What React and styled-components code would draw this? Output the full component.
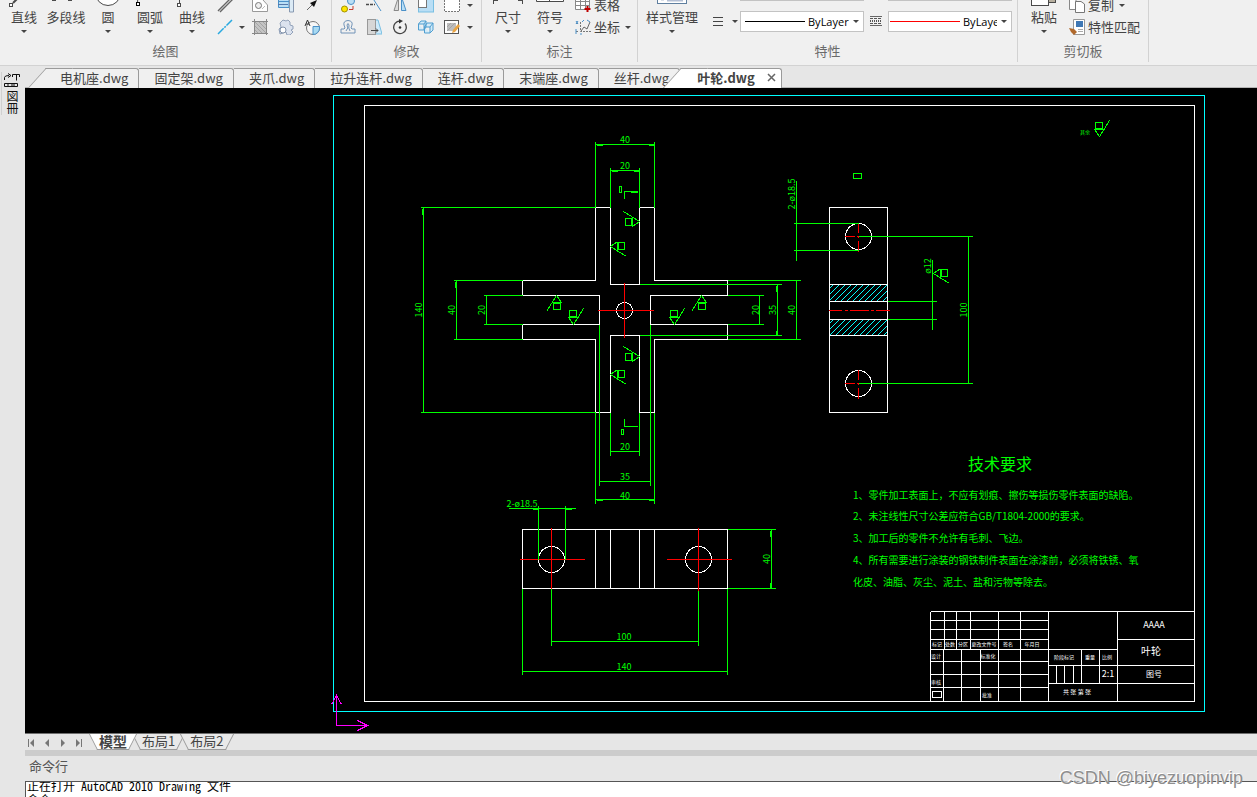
import React from "react";
import styled, { createGlobalStyle } from "styled-components";

const GlobalStyle = createGlobalStyle`
  * {
    box-sizing: border-box;
  }
  body {
    margin: 0;
    background-color: #e6e6e6;
    color: #444444;
    font-family: "Noto Sans CJK SC", "Noto Sans", sans-serif;
    font-size: 13px;
  }
  button {
    padding: 0;
    border: 0;
    background: none;
    color: inherit;
    font: inherit;
  }
`;

const Window = styled.div`
  position: relative;
  height: 100vh;
  display: flex;
  flex-direction: column;
  overflow: hidden;
`;

/* ribbon */

const Ribbon = styled.header`
  display: flex;
  flex: none;
  padding-bottom: 3px;
  overflow: hidden;
  background-color: #f0f0f0;
  border-bottom: 1px solid #d2d2d2;
`;

const Group = styled.section`
  display: flex;
  flex-direction: column;
  flex: none;
  border-right: 1px solid #d2d2d2;
`;

const GroupBody = styled.div`
  display: flex;
  align-items: flex-end;
  height: 42px;
  padding: ${(props) => props.$pad};
`;

const GroupTitle = styled.h2`
  margin: 0;
  height: 20px;
  color: #6a6a6a;
  font-size: 13px;
  font-weight: 400;
  line-height: 18px;
  text-align: center;
`;

const BigButton = styled.button`
  display: flex;
  flex-direction: column;
  align-items: center;
  flex: none;
  width: ${(props) => (props.$wide ? 60 : 42)}px;
  padding-bottom: 6px;
  line-height: 18px;
  white-space: nowrap;
`;

const CaretBox = styled.span`
  display: flex;
  align-items: center;
  justify-content: center;
  width: 10px;
  height: 10px;
  &::before {
    content: "";
    display: ${(props) => (props.$hidden ? "none" : "block")};
    border: 3px solid transparent;
    border-top-color: #444444;
    border-bottom-width: 0;
  }
`;

const CaretButton = styled(CaretBox).attrs({ as: "button" })`
  height: 22px;
`;

const ToolRows = styled.div`
  display: flex;
  flex-direction: column;
  padding-bottom: 4px;
`;

const ToolRow = styled.div`
  display: flex;
  height: 22px;
`;

const IconButton = styled.button`
  display: flex;
  align-items: center;
  justify-content: center;
  width: ${(props) => (props.$first ? 24 : 26)}px;
  height: 22px;
`;

const TextButton = styled.button`
  display: flex;
  align-items: center;
  gap: 3px;
  height: 22px;
  margin-left: 4px;
  line-height: 20px;
  white-space: nowrap;
`;

const ComboRows = styled.div`
  display: flex;
  flex-direction: column;
  gap: 9px;
  padding: 0 5px 10px 4px;
`;

const ComboRow = styled.div`
  display: flex;
  align-items: center;
`;

const Combo = styled.label`
  display: flex;
  align-items: center;
  width: 124px;
  height: 21px;
  padding: 0 2px 0 ${(props) => (props.$cut ? 1 : 4)}px;
  background-color: #ffffff;
  border: 1px solid #c3c3c3;
  &::before {
    content: "";
    flex: 1;
    height: 1px;
    margin-right: 3px;
    background-color: ${(props) => props.$line};
  }
`;

const ComboSelect = styled.select`
  width: ${(props) => (props.$cut ? 34 : 43)}px;
  height: 19px;
  margin: 0 ${(props) => (props.$cut ? 2 : 0)}px 0 0;
  padding: 0;
  border: 0;
  background: none;
  color: #000000;
  font-family: "Open Sans", "Noto Sans", sans-serif;
  font-size: 11px;
  text-overflow: clip;
  appearance: none;
`;

/* file tabs and canvas */

const Workspace = styled.div`
  display: flex;
  flex: 1;
  min-height: 0;
`;

const Palette = styled.aside`
  flex: none;
  width: 25px;
  padding: 6px 0 0 1px;
`;

const PaletteTab = styled.button`
  display: flex;
  flex-direction: column;
  align-items: center;
  width: 21px;
  height: 43px;
  border-left: 1px solid #d0d0d0;
  color: #111111;
  font-size: 12px;
`;

const PaletteLabel = styled.span`
  line-height: 14px;
  writing-mode: vertical-rl;
`;

const Editor = styled.main`
  display: flex;
  flex-direction: column;
  flex: 1;
  min-width: 0;
`;

const FileTabs = styled.nav`
  display: flex;
  flex: none;
  height: 22px;
  padding: 2px 0 0 20px;
  border-bottom: 1px solid #b4b4b4;
`;

const FileTab = styled.button`
  position: relative;
  display: flex;
  align-items: center;
  gap: 12px;
  height: 20px;
  padding: 0 10px 2px ${(props) => (props.$active ? 17 : 15)}px;
  background-color: ${(props) => (props.$active ? "#ffffff" : "#f0f0f0")};
  border-top: 1px solid #9a9a9a;
  border-right: 1px solid #9a9a9a;
  border-top-right-radius: 3px;
  font-weight: ${(props) => (props.$active ? 700 : 400)};
  line-height: 17px;
  white-space: nowrap;
  &::before {
    content: "";
    display: ${(props) => (props.$slant ? "block" : "none")};
    position: absolute;
    top: -1px;
    left: -18px;
    width: 26px;
    height: 20px;
    background-color: inherit;
    border-top: 1px solid #9a9a9a;
    border-left: 1px solid #9a9a9a;
    transform: skewX(-42deg);
    transform-origin: bottom left;
  }
`;

const TabLabel = styled.span`
  position: relative;
`;

const CloseIcon = styled.svg`
  margin-right: -5px;
`;

const Canvas = styled.div`
  position: relative;
  z-index: 1;
  flex: 1;
  min-height: 0;
  background-color: #000000;
`;

const Sheet = styled.svg`
  display: block;
  width: 100%;
  height: 100%;
`;

const Lines = styled.path`
  fill: none;
  stroke: ${(props) => props.$color};
  stroke-width: 1px;
  shape-rendering: crispEdges;
`;

const Note = styled.text`
  fill: ${(props) => props.$color || "#00ff00"};
  font-family: "Liberation Sans Narrow", "Noto Sans CJK SC", sans-serif;
  font-size: ${(props) => props.$size || 9}px;
  text-anchor: ${(props) => (props.$start ? "start" : "middle")};
`;

/* layout tabs */

const LayoutBar = styled.nav`
  display: flex;
  flex: none;
  height: 17px;
  padding-left: 2px;
  border-top: 1px solid #6e6e6e;
`;

const NavButton = styled.button`
  display: flex;
  align-items: center;
  width: 16px;
  height: 18px;
`;

const LayoutTab = styled.button`
  position: relative;
  z-index: ${(props) => (props.$active ? 1 : 0)};
  height: 16px;
  margin-left: ${(props) => (props.$active ? 8 : 15)}px;
  font-size: ${(props) => (props.$active ? 14 : 13)}px;
  font-weight: ${(props) => (props.$active ? 700 : 400)};
  line-height: 12px;
  padding-bottom: 3px;
  &::before,
  &::after {
    content: "";
    position: absolute;
    z-index: -1;
    top: 0;
    bottom: 0;
    width: 60%;
    background-color: ${(props) => (props.$active ? "#ffffff" : "#e9e9e9")};
    border-bottom: 1px solid #9a9a9a;
  }
  &::before {
    left: -6px;
    border-left: 1px solid #9a9a9a;
    transform: skewX(27deg);
  }
  &::after {
    right: -6px;
    border-right: 1px solid #9a9a9a;
    transform: skewX(-27deg);
  }
`;

const Splitter = styled.div`
  flex: none;
  height: 6px;
  background-color: #cccccc;
`;

/* command line */

const Command = styled.section`
  flex: none;
`;

const CommandTitle = styled.h2`
  margin: 0;
  height: 25px;
  padding-left: 4px;
  color: #555555;
  font-size: 13px;
  font-weight: 400;
  line-height: 20px;
`;

const History = styled.div`
  height: 16px;
  padding-left: 1px;
  overflow: hidden;
  background-color: #ffffff;
  border-top: 1px solid #555555;
  border-left: 1px solid #555555;
`;

const HistoryText = styled.p`
  margin: -3px 0 0;
  color: #000000;
  font-family: "Noto Sans Mono CJK SC", "Liberation Mono", monospace;
  font-size: 12px;
  line-height: 14px;
  white-space: pre;
`;

const Watermark = styled.div`
  position: absolute;
  right: 14px;
  bottom: 9px;
  color: #8f8f8f;
  font-family: "Liberation Sans", Arial, sans-serif;
  font-size: 18px;
  line-height: 20px;
  text-shadow: -1px -1px 0 #ffffff;
`;

const GREEN = "#00ff00";
const WHITE = "#ffffff";
const RED = "#ff0000";
const CYAN = "#00ffff";
const DARK = "#4a4a4a";
const BLUE = "#4a90c8";
const PALE = "#b9def5";

const bigIcons = {
  line: (
    <>
      <path d="M5 27L28 4" stroke={DARK} strokeWidth="2" />
      <rect x="1.5" y="27.5" width="3" height="3" fill="#fff" stroke={DARK} />
    </>
  ),
  polyline: (
    <>
      <rect x="2" y="22" width="4" height="3" fill={DARK} />
      <rect x="18" y="22" width="4" height="3" fill={DARK} />
    </>
  ),
  circle: <circle cx="16" cy="17" r="12.5" fill="#fff" stroke={DARK} />,
  arc: (
    <>
      <path d="M3.5 27Q3 8 28 4" stroke={DARK} fill="none" />
      <rect x="2.5" y="26.5" width="3" height="3" fill="#fff" stroke="#000" />
    </>
  ),
  curve: (
    <>
      <path d="M3.5 28V12" stroke={DARK} />
      <rect x="1.5" y="27.5" width="3" height="3" fill="#fff" stroke={DARK} />
    </>
  ),
  size: <path d="M1.5 28V10M30.5 28V10M2 24.5H6M26 24.5H30" stroke={DARK} />,
  symbol: <path d="M2.5 8V25.5H29.5V8M15.5 8V25" fill="#fff" stroke={DARK} />,
  style: (
    <>
      <rect x="1.5" y="4.5" width="29" height="23" fill="#fff" stroke="#5f7f9f" />
      <path d="M5 23.5H8M11 22.5H27M11 24.5H27" stroke="#b4bfd4" strokeWidth="2" />
    </>
  ),
  paste: (
    <>
      <rect x="20.5" y="8.5" width="7" height="18" fill="#b8b0a0" stroke={DARK} />
      <rect x="3.5" y="8.5" width="17" height="21" fill="#fff" stroke={DARK} />
    </>
  ),
};

const icons = {
  parallel: <path d="M1 14L15 0M3 15L17 1" stroke="#666" strokeWidth="1.4" />,
  ray: <path d="M1 15L15 1" stroke="#29a9e0" strokeWidth="1.5" strokeDasharray="8 1 2 1" />,
  region: (
    <>
      <path d="M.5 0V14.5H15.5V8L11 3V0" fill="#fff" stroke="#999" />
      <circle cx="6.5" cy="8.5" r="3" fill="#eee" stroke="#777" />
      <path d="M10 12L13 9" stroke="#bbb" />
    </>
  ),
  hatch: (
    <>
      <rect x="3" y="3" width="11" height="11" fill="#c4c4c4" />
      <path d="M3 3L14 14M3 7L10 14M7 3L14 10M11 3L14 6M3 11L6 14" stroke="#a4a4a4" />
      <path d="M2.5 0V16M14.5 0V16M0 2.5H16M0 14.5H16" stroke="#888" />
    </>
  ),
  table: (
    <>
      <path d="M.5 0V10.5H11V0M.5 4.5H15" fill={PALE} stroke={BLUE} />
      <path d="M0 7.5H10" stroke="#5577aa" />
      <path d="M11.5 0V15H15.5V0" stroke="#8798b0" fill="#dbeaf5" />
    </>
  ),
  cloud: (
    <>
      <path
        d="M5 1L8 2L10 1L12 3L12 6L15 7V10L13 11L15 13L12 16H9L8 13L2 15L1 10L3 8L2 4Z"
        fill="#dbe2ee"
        stroke="#91a1b9"
      />
      <circle cx="5" cy="11" r="3" fill="#fff" stroke="#8393ab" />
    </>
  ),
  pointer: (
    <>
      <path d="M3 13L9 7" stroke="#666" />
      <path d="M6 6L13 3L10 10Z" fill="#111" />
    </>
  ),
  pie: (
    <>
      <circle cx="9" cy="9" r="6.5" fill="#f7f7f7" stroke="#777" />
      <path d="M9 7.500H15.5V9A6.500 6.500 0 0 1 9 15.500Z" fill="#a8daf2" stroke={BLUE} />
      <path d="M1 7L3.500 1L6 7M2 5H5" fill="none" stroke="#333" />
    </>
  ),
  copyDots: (
    <>
      <circle cx="11" cy="4" r="3.500" fill={PALE} stroke={BLUE} />
      <circle cx="4.500" cy="12" r="3" fill="#ffe500" stroke="#a09000" />
      <path d="M9 12.500H13V9" fill="none" stroke="#c43b2f" />
    </>
  ),
  trim: (
    <>
      <path d="M0 7.500H9" stroke={DARK} strokeDasharray="3 1" strokeWidth="1.500" />
      <path d="M6 0L15 14" stroke={BLUE} />
    </>
  ),
  mirror: (
    <>
      <path d="M6.500 0V13.500H2Z" fill="#ddd" stroke="#888" />
      <path d="M9.500 0V13.500H14Z" fill={PALE} stroke={BLUE} />
    </>
  ),
  scale: (
    <>
      <rect x=".5" y="-5" width="15" height="20" fill={PALE} stroke="#79bfe2" />
      <rect x=".5" y="2.500" width="8" height="8" fill="#fff" stroke="#777" />
    </>
  ),
  box: <path d="M.5 0V14.500H15.500V0" fill="#fff" stroke="#777" strokeDasharray="2 1" />,
  offset: (
    <path
      d="M1 14H15M1 10H4Q6 10 4 6Q3 2 8 1.500Q13 2 12 6Q10 10 12 10H15V14M1 14V10M6 12Q9 9 7 6Q8 3 9 6Q8 9 10 12"
      fill="none"
      stroke="#7294b8"
    />
  ),
  stretch: (
    <>
      <path d="M9 1H12L16 15H9Z" fill="#cfeafa" stroke="#79bfe2" />
      <rect x="1.500" y=".5" width="8" height="15" fill="#d6d6d6" stroke="#999" />
      <path d="M5 11.500H12M10 9.500L12 11.500L10 13.500" fill="none" stroke="#444" />
    </>
  ),
  rotate: (
    <>
      <path d="M8 2A6.300 6.300 0 1 0 13 4.500" fill="none" stroke="#444" strokeWidth="1.300" />
      <path d="M7 0L11 2L7 4.500Z" fill="#333" />
      <circle cx="8" cy="8.500" r="1.300" fill="#333" />
    </>
  ),
  cubes: (
    <path
      d="M.5 5V11H6V5ZM.5 5L3 2H8V8L6 11M6 5L8 2M6.500 8V14H12V8ZM6.500 8L9 4H15V11L12 14M12 8L15 4"
      fill="#d2ebf9"
      stroke="#4f9ed0"
    />
  ),
  editHatch: (
    <>
      <rect x=".5" y="1.500" width="14" height="13" fill="#fff" stroke="#555" />
      <path d="M3 4H12V12H3Z" fill="#bdbdbd" />
      <path d="M3 12L11 4M3 8L7 4" stroke="#a4a4a4" />
      <path d="M9 11L14 5L16 7L11 13L8 14Z" fill="#e9a544" />
    </>
  ),
  grid: (
    <>
      <path d="M.5 0V12.500H14.500V0M0 4.500H15M0 8.500H15M5.500 0V12M10.500 0V12" fill="#fff" stroke="#888" />
      <path d="M12.500 9V15M9.500 12H15.500" stroke="#c00000" strokeWidth="2" />
    </>
  ),
  coord: (
    <>
      <path d="M5.500 3V12.500H16M1 4.500H4M1 12.500H3" fill="none" stroke="#777" strokeDasharray="2 1" />
      <path d="M6 12L9 8L12 10L15 3" fill="none" stroke="#666" />
      <path d="M1 2L3 5M3 2L1 5M12 1L15 3M9 1L7 3M1 10V15M6 14V16" stroke={BLUE} />
    </>
  ),
  copy: (
    <>
      <path d="M.5 0V12.500H7V0Z" fill="#fff" stroke="#888" />
      <path d="M6.500 4.500H12L15.500 7V15.500H6.500Z" fill="#fff" stroke="#777" />
    </>
  ),
  match: (
    <>
      <path d="M4.500 0.500H15.500V15.500H4.500Z" fill="#fff" stroke="#999" />
      <rect x="7" y="2" width="7" height="6" fill="#3f78b5" />
      <path d="M9 10.500H14M9 12.500H14" stroke="#aaa" />
      <path d="M0 9L5 10L8 13L5 16L2 13Z" fill="#b0692c" />
    </>
  ),
  weight: <path d="M3 4.500H13M3 8.500H13M3 12.500H13" stroke="#444" strokeWidth="1" />,
  linetype: (
    <>
      <path d="M2 3.500H14M2 12.500H14" stroke="#666" />
      <path d="M2 5.500H14M2 10.500H14" stroke="#555" strokeDasharray="3 1" />
      <path d="M2 8H14" stroke="#555" strokeWidth="2" strokeDasharray="1 1" />
    </>
  ),
};

const Icon = ({ name }) => (
  <svg width="16" height="16" viewBox="0 0 16 16" fill="none" aria-hidden="true">
    {icons[name]}
  </svg>
);

const Big = ({ icon, label, caret = true, wide }) => (
  <BigButton $wide={wide}>
    <svg width="32" height="32" viewBox="0 0 32 32" fill="none" aria-hidden="true">
      {bigIcons[icon]}
    </svg>
    <span>{label}</span>
    <CaretBox $hidden={!caret} />
  </BigButton>
);

const LayerCombo = ({ name, line, cut }) => (
  <Combo $line={line} $cut={cut}>
    <ComboSelect $cut={cut} aria-label={name}>
      <option>ByLayer</option>
    </ComboSelect>
    <CaretBox />
  </Combo>
);

const Toolbar = () => (
  <Ribbon>
    <Group>
      <GroupBody $pad="0 6px 0 3px">
        <Big icon="line" label="直线" />
        <Big icon="polyline" label="多段线" caret={false} />
        <Big icon="circle" label="圆" />
        <Big icon="arc" label="圆弧" />
        <Big icon="curve" label="曲线" />
        <ToolRows>
          {[
            ["parallel", "region", "table", "pointer"],
            ["ray", "hatch", "cloud", "pie"],
          ].map(([first, ...rest], row) => (
            <ToolRow key={first}>
              <IconButton $first aria-label={first}>
                <Icon name={first} />
              </IconButton>
              <CaretButton $hidden={row === 0} aria-label="more" />
              {rest.map((name) => (
                <IconButton key={name} aria-label={name}>
                  <Icon name={name} />
                </IconButton>
              ))}
            </ToolRow>
          ))}
        </ToolRows>
      </GroupBody>
      <GroupTitle>绘图</GroupTitle>
    </Group>
    <Group>
      <GroupBody $pad="0 6px 0 3px">
        <ToolRows>
          {[
            ["copyDots", "trim", "mirror", "scale", "box"],
            ["offset", "stretch", "rotate", "cubes", "editHatch"],
          ].map((row) => (
            <ToolRow key={row[0]}>
              {row.map((name) => (
                <IconButton key={name} aria-label={name}>
                  <Icon name={name} />
                </IconButton>
              ))}
              <CaretButton aria-label="more" />
            </ToolRow>
          ))}
        </ToolRows>
      </GroupBody>
      <GroupTitle>修改</GroupTitle>
    </Group>
    <Group>
      <GroupBody $pad="0 4px 0 5px">
        <Big icon="size" label="尺寸" />
        <Big icon="symbol" label="符号" />
        <ToolRows>
          <TextButton>
            <Icon name="grid" />
            表格
          </TextButton>
          <TextButton>
            <Icon name="coord" />
            坐标
            <CaretBox />
          </TextButton>
        </ToolRows>
      </GroupBody>
      <GroupTitle>标注</GroupTitle>
    </Group>
    <Group>
      <GroupBody $pad="0 0 0 4px">
        <Big icon="style" label="样式管理" wide />
        <ComboRows>
          {["upper", "lower"].map((row) => (
            <ComboRow key={row}>
              <IconButton $first aria-label="线宽">
                <Icon name="weight" />
              </IconButton>
              <CaretButton aria-label="more" />
              <LayerCombo name="线型" line="#000000" />
              <IconButton $first aria-label="线型比例">
                <Icon name="linetype" />
              </IconButton>
              <LayerCombo name="颜色" line={RED} cut />
            </ComboRow>
          ))}
        </ComboRows>
      </GroupBody>
      <GroupTitle>特性</GroupTitle>
    </Group>
    <Group>
      <GroupBody $pad="0 8px 0 5px">
        <Big icon="paste" label="粘贴" />
        <ToolRows>
          <TextButton>
            <Icon name="copy" />
            复制
            <CaretBox />
          </TextButton>
          <TextButton>
            <Icon name="match" />
            特性匹配
          </TextButton>
        </ToolRows>
      </GroupBody>
      <GroupTitle>剪切板</GroupTitle>
    </Group>
  </Ribbon>
);

/* surface finish mark, tip at x,y */
const Finish = ({ x, y, turn = 0 }) => (
  <Lines
    $color={GREEN}
    transform={`translate(${x} ${y}) rotate(${turn})`}
    d="M-5 -7H5M-5 -7L0 0L10 -16M-4 -14H3V-8H-4Z"
  />
);

const Hole = ({ x, y, r = 13 }) => (
  <circle cx={x} cy={y} r={r} fill="none" stroke={WHITE} shapeRendering="crispEdges" />
);

const UpNote = ({ x, y, children }) => (
  <Note transform={`translate(${x} ${y}) rotate(-90)`}>{children}</Note>
);

const hatchLines = (top, bottom) => {
  let d = "";
  const h = bottom - top;
  for (let x = 829 - h + 4; x < 887; x += 6) {
    const x1 = Math.max(x, 829);
    const x2 = Math.min(x + h, 887);
    d += `M${x1} ${bottom - (x1 - x)}L${x2} ${bottom - (x2 - x)}`;
  }
  return d;
};

const titleBlock = [
  "M930 611V701M1048 611V701M1117 611V701M930 611H1194",
  "M930 620H1048M930 629H1048M930 639H1048M930 649H1117M930 661H1048M930 674H1048M930 687H1048",
  "M944 611V649M956 611V649M970 611V649M998 611V701M1020 611V701",
  "M943 649V701M961 649V701M980 649V701",
  "M1048 665H1194M1048 683H1194M1117 639H1194M1081 649V683M1099 649V683",
  "M1056 665V683M1064 665V683M1073 665V683M932 691H941V697H932Z",
].join("");

const blockNotes = [
  [937, 646, 5, "标记"],
  [950, 646, 5, "处数"],
  [963, 646, 5, "分区"],
  [984, 646, 5, "更改文件号"],
  [1008, 646, 5, "签名"],
  [1032, 646, 5, "年月日"],
  [936, 658, 5, "设计"],
  [988, 658, 5, "标准化"],
  [936, 684, 5, "审核"],
  [987, 697, 5, "批准"],
  [1064, 659, 5, "阶段标记"],
  [1090, 659, 5, "重量"],
  [1107, 659, 5, "比例"],
  [1108, 677, 9, "2:1"],
  [1077, 694, 6, "共 张 第 张"],
  [1154, 628, 9, "AAAA"],
  [1151, 655, 10, "叶轮"],
  [1154, 677, 8, "图号"],
];

const Drawing = () => (
  <Sheet viewBox="25 88 1232 645">
    <g transform="translate(.5 .5)">
      <Lines $color={CYAN} d="M333 95H1204V711H333Z" />
      <Lines $color={WHITE} d="M364 105H1194V701H364Z" />

      <Lines $color={CYAN} d={hatchLines(284, 301) + hatchLines(319, 335)} />
      <Lines
        $color={WHITE}
        d="M595 207H610V284H639V207H654V280H727V295H650V324H727V339H654V412H639V335H610V412H595V339H522V324H599V295H522V280H595Z"
      />
      <Lines $color={WHITE} d="M829 207H887V412H829ZM829 284H887M829 301H887M829 319H887M829 335H887" />
      <Lines $color={WHITE} d="M522 529H727V588H522ZM595 529V588M610 529V588M639 529V588M654 529V588" />
      <Hole x={624} y={310} r={8} />
      <Hole x={858} y={236} />
      <Hole x={858} y={383} />
      <Hole x={551} y={559} />
      <Hole x={698} y={559} />

      <Lines $color={RED} d="M597 310H653M624 282V337M519 559H584M551 527V588M666 559H731M698 527V590" />
      <Lines
        $color={RED}
        d="M828 310H841M844 310H847M849 310H868M870 310H873M875 310H889M844 236H854M856 236H858M858 222V232M858 235V237M858 240V251M844 383H854M856 383H858M858 369V379M858 382V384M858 387V398"
      />

      <Lines
        $color={GREEN}
        d="M595 141V207M654 141V207M595 144H654M596 145H602M648 145H654M610 167V207M639 167V207M610 170H639M611 171H617M633 171H639"
      />
      <Lines
        $color={GREEN}
        d="M420 207H595M420 412H595M423 207V412M422 208V214M453 280H522M453 339H522M456 280V339M455 281V287M483 295H522M483 324H522M486 295V324"
      />
      <Lines
        $color={GREEN}
        d="M727 280H800M727 339H800M796 280V339M639 284H781M639 335H781M777 284V335M776 285V291M776 330V335M727 295H763M727 324H763M759 295V324"
      />
      <Lines
        $color={GREEN}
        d="M610 412V455M639 412V455M610 451H639M599 324V485M650 324V485M599 481H650M595 412V503M654 412V503M595 499H654M596 500H602M648 500H654"
      />
      <Lines
        $color={GREEN}
        d="M793 223H858M793 250H858M796 180V260M858 236H972M858 383H972M968 236V383M887 301H936M887 319H936M932 259V329"
      />
      <Lines
        $color={GREEN}
        d="M508 508H575M538 505V559M565 505V559M532 509H538M565 509H571M727 529H775M727 588H775M771 529V588M770 530V536M770 582V588M551 588V645M698 590V645M551 641H698M522 588V674M727 588V674M522 671H727"
      />
      <Lines
        $color={GREEN}
        d="M624 198V191H637M630 192H637M624 418V426H637M619 186H621V192H619ZM621 429H623V434H621ZM853 173H861V178H853Z"
      />

      <Finish x={639} y={221} turn={-90} />
      <Finish x={610} y={246} turn={90} />
      <Finish x={556} y={295} turn={180} />
      <Finish x={573} y={324} />
      <Finish x={674} y={324} />
      <Finish x={701} y={295} turn={180} />
      <Finish x={639} y={356} turn={-90} />
      <Finish x={610} y={374} turn={90} />
      <Finish x={933} y={273} turn={90} />
      <Finish x={1099} y={136} />

      <Lines $color={WHITE} d={titleBlock} />
      <Lines $color="#ff00ff" d="M336 695V725H367M331 704L336 695L341 704M357 720L367 725L357 730" />
    </g>

    <Note x={625} y={143}>40</Note>
    <Note x={625} y={169}>20</Note>
    <Note x={625} y={450}>20</Note>
    <Note x={625} y={480}>35</Note>
    <Note x={625} y={499}>40</Note>
    <Note x={624} y={640}>100</Note>
    <Note x={624} y={670}>140</Note>
    <Note x={522} y={507}>2-ø18.5</Note>
    <UpNote x={422} y={310}>140</UpNote>
    <UpNote x={455} y={310}>40</UpNote>
    <UpNote x={485} y={310}>20</UpNote>
    <UpNote x={759} y={310}>20</UpNote>
    <UpNote x={776} y={310}>35</UpNote>
    <UpNote x={795} y={310}>40</UpNote>
    <UpNote x={770} y={559}>40</UpNote>
    <UpNote x={795} y={194}>2-ø18.5</UpNote>
    <UpNote x={931} y={266}>ø12</UpNote>
    <UpNote x={967} y={310}>100</UpNote>
    <Note x={1085} y={134} $size={5}>其余</Note>

    <Note x={1000} y={470} $size={16}>技术要求</Note>
    <Note x={853} y={499} $size={10} $start>1、零件加工表面上，不应有划痕、擦伤等损伤零件表面的缺陷。</Note>
    <Note x={853} y={520} $size={10} $start>2、未注线性尺寸公差应符合GB/T1804-2000的要求。</Note>
    <Note x={853} y={542} $size={10} $start>3、加工后的零件不允许有毛刺、飞边。</Note>
    <Note x={853} y={564} $size={10} $start>4、所有需要进行涂装的钢铁制件表面在涂漆前，必须将铁锈、氧</Note>
    <Note x={853} y={586} $size={10} $start>化皮、油脂、灰尘、泥土、盐和污物等除去。</Note>

    {blockNotes.map(([x, y, size, text]) => (
      <Note key={`${x}-${y}`} x={x} y={y} $size={size} $color={WHITE}>
        {text}
      </Note>
    ))}
  </Sheet>
);

const files = ["电机座", "固定架", "夹爪", "拉升连杆", "连杆", "末端座", "丝杆"];

const navIcons = [
  ["first", "M1 0H2V8H1ZM7 0V8L3 4Z"],
  ["previous", "M6 0V8L2 4Z"],
  ["next", "M2 0V8L6 4Z"],
  ["last", "M1 0V8L5 4ZM6 0H7V8H6Z"],
];

const App = () => {
  return (
    <>
      <GlobalStyle />
      <Window>
        <Toolbar />
        <Workspace>
          <Palette>
            <PaletteTab>
              <svg width="16" height="18" viewBox="0 0 16 18" fill="none" stroke="#111" aria-hidden="true">
                <path d="M.5 8V5.500Q.5 3.500 5 3.500M4 1.500L7 3.500L4 5.500M8.500 5V2.500H15.500V5M12.500 3V8.500M.5 11.500H13.500V14.500H.5ZM3 13H5M7 13H11" />
              </svg>
              <PaletteLabel>図冊</PaletteLabel>
            </PaletteTab>
          </Palette>
          <Editor>
            <FileTabs>
              {files.map((name, i) => (
                <FileTab key={name} $slant={i === 0}>
                  <TabLabel>{name}.dwg</TabLabel>
                </FileTab>
              ))}
              <FileTab $active $slant>
                <TabLabel>叶轮.dwg</TabLabel>
                <CloseIcon width="9" height="9" viewBox="0 0 9 9" aria-hidden="true">
                  <path d="M1 1L8 8M8 1L1 8" stroke="#666" strokeWidth="1.500" />
                </CloseIcon>
              </FileTab>
            </FileTabs>
            <Canvas>
              <Drawing />
            </Canvas>
            <LayoutBar>
              {navIcons.map(([name, d]) => (
                <NavButton key={name} aria-label={name}>
                  <svg width="8" height="8" viewBox="0 0 8 8" aria-hidden="true">
                    <path d={d} fill="#777" />
                  </svg>
                </NavButton>
              ))}
              <LayoutTab $active>模型</LayoutTab>
              <LayoutTab>布局1</LayoutTab>
              <LayoutTab>布局2</LayoutTab>
            </LayoutBar>
            <Splitter />
            <Command>
              <CommandTitle>命令行</CommandTitle>
              <History role="log">
                <HistoryText>{"正在打开 AutoCAD 2010 Drawing 文件\n命令："}</HistoryText>
              </History>
            </Command>
          </Editor>
        </Workspace>
        <Watermark>CSDN @biyezuopinvip</Watermark>
      </Window>
    </>
  );
};

export default App;
